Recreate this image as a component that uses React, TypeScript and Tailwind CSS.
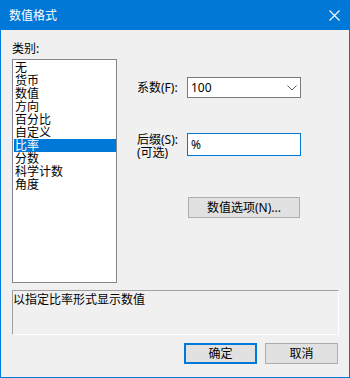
const categories = ["无", "货币", "数值", "方向", "百分比", "自定义", "比率", "分数", "科学计数", "角度"];

export default function App() {
  return (
    <div className="flex h-[378px] w-[350px] flex-col border border-t-0 border-[#0078d7] bg-[#f0f0f0] font-['Noto_Sans','Noto_Sans_CJK_SC',sans-serif] text-[12px] leading-[13px] text-black">
      {/* title bar */}
      <div className="flex h-[30px] shrink-0 items-center justify-between bg-[#0078d7] pl-[8px] pr-[9px] text-white">
        <span>数值格式</span>
        <svg width="11" height="11" viewBox="0 0 11 11" aria-hidden>
          <path d="M0.5 0.5L10.5 10.5M10.5 0.5L0.5 10.5" stroke="white" strokeWidth="1.1" />
        </svg>
      </div>

      <div className="flex flex-col pl-[11px]">
        <div className="flex">
          <div className="flex w-[105px] flex-col pt-[12px]">
            <div>类别:</div>
            <div className="mt-[4px] h-[224px] border border-[#828790] bg-white pl-[1px] pt-[1px]">
              {categories.map((c) => (
                <div
                  key={c}
                  className={`h-[13px] pl-[1px] ${c === "比率" ? "bg-[#0078d7] text-white" : ""}`}
                >
                  {c}
                </div>
              ))}
            </div>
          </div>

          <div className="ml-[20px] flex flex-col pt-[47px]">
            <div className="flex items-center">
              <span className="w-[50px]">系数(F):</span>
              <div className="flex h-[21px] w-[114px] items-center justify-between border border-[#7a7a7a] bg-white pl-[3px] pr-[3px]">
                <span>100</span>
                <svg width="10" height="6" viewBox="0 0 10 6" aria-hidden>
                  <polyline points="0.5,0.5 5,5 9.5,0.5" fill="none" stroke="#606060" strokeWidth="1" />
                </svg>
              </div>
            </div>

            <div className="mt-[35px] flex items-start">
              <span className="w-[50px] pt-[0px]">
                后缀(S):
                <br />
                (可选)
              </span>
              <div className="flex h-[23px] w-[114px] items-center border border-[#0078d7] bg-white pl-[3px]">
                <span>%</span>
              </div>
            </div>

            <div className="ml-[51px] mt-[38px] flex h-[21px] w-[112px] items-center justify-center border border-[#adadad] bg-[#e1e1e1]">
              数值选项(N)...
            </div>
          </div>
        </div>

        <div className="mt-[7px] h-[45px] w-[327px] border border-b-white border-l-[#a0a0a0] border-r-white border-t-[#a0a0a0] pt-[2px]">
          以指定比率形式显示数值
        </div>

        <div className="mt-[8px] flex w-[326px] justify-end gap-[8px]">
          <div className="flex h-[21px] w-[73px] items-center justify-center border-2 border-[#0078d7] bg-[#e1e1e1]">
            确定
          </div>
          <div className="flex h-[21px] w-[73px] items-center justify-center border border-[#adadad] bg-[#e1e1e1]">
            取消
          </div>
        </div>
      </div>
    </div>
  );
}
